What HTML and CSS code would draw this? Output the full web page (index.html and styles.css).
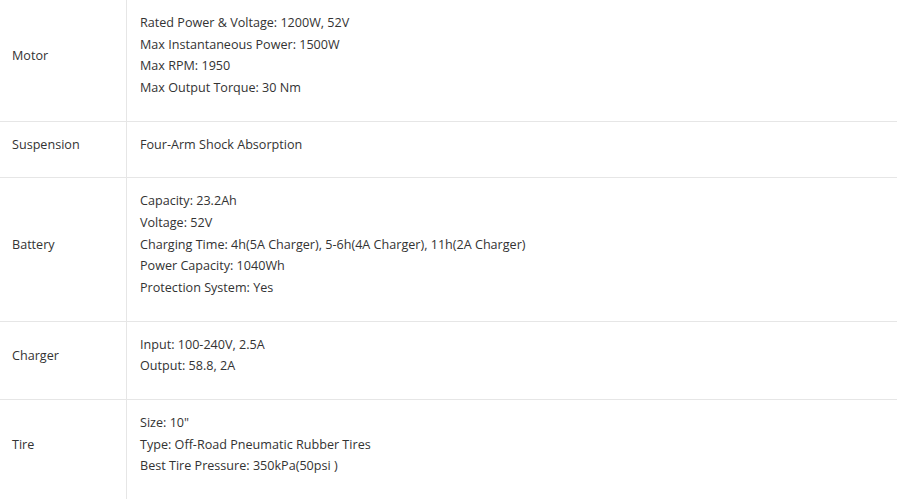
FILE: index.html
```html
<!DOCTYPE html>
<html lang="en">
<head>
<meta charset="utf-8">
<title>Specifications</title>
<link rel="stylesheet" href="styles.css">
</head>
<body>
<table class="spec-table">
  <colgroup>
    <col class="col-label">
    <col class="col-value">
  </colgroup>
  <tbody>
    <tr>
      <td class="spec-label"><p>Motor</p></td>
      <td class="spec-value"><p>Rated Power &amp; Voltage: 1200W, 52V<br>Max Instantaneous Power: 1500W<br>Max RPM: 1950<br>Max Output Torque: 30 Nm</p></td>
    </tr>
    <tr>
      <td class="spec-label"><p>Suspension</p></td>
      <td class="spec-value"><p>Four-Arm Shock Absorption</p></td>
    </tr>
    <tr>
      <td class="spec-label"><p>Battery</p></td>
      <td class="spec-value"><p>Capacity: 23.2Ah<br>Voltage: 52V<br>Charging Time: 4h(5A Charger), 5-6h(4A Charger), 11h(2A Charger)<br>Power Capacity: 1040Wh<br>Protection System: Yes</p></td>
    </tr>
    <tr>
      <td class="spec-label"><p>Charger</p></td>
      <td class="spec-value"><p>Input: 100-240V, 2.5A<br>Output: 58.8, 2A</p></td>
    </tr>
    <tr>
      <td class="spec-label"><p>Tire</p></td>
      <td class="spec-value"><p>Size: 10"<br>Type: Off-Road Pneumatic Rubber Tires<br>Best Tire Pressure: 350kPa(50psi )</p></td>
    </tr>
  </tbody>
</table>
</body>
</html>
```

FILE: styles.css
```css
html, body {
  margin: 0;
  padding: 0;
  background: #ffffff;
}

body {
  font-family: "Open Sans", "Liberation Sans", sans-serif;
  font-size: 12.6px;
  line-height: 21.67px;
  color: #333333;
}

.spec-table {
  width: 897px;
  border-collapse: separate;
  border-spacing: 0;
  table-layout: fixed;
}

.col-label {
  width: 126px;
}

.spec-table td {
  padding: 12px;
  vertical-align: middle;
  text-align: left;
}

.spec-table td + td {
  border-left: 1px solid #e6e6e6;
  padding-left: 13px;
}

.spec-table tr + tr td {
  border-top: 1px solid #e6e6e6;
}

.spec-table p {
  margin: 0 0 10px;
}
```
